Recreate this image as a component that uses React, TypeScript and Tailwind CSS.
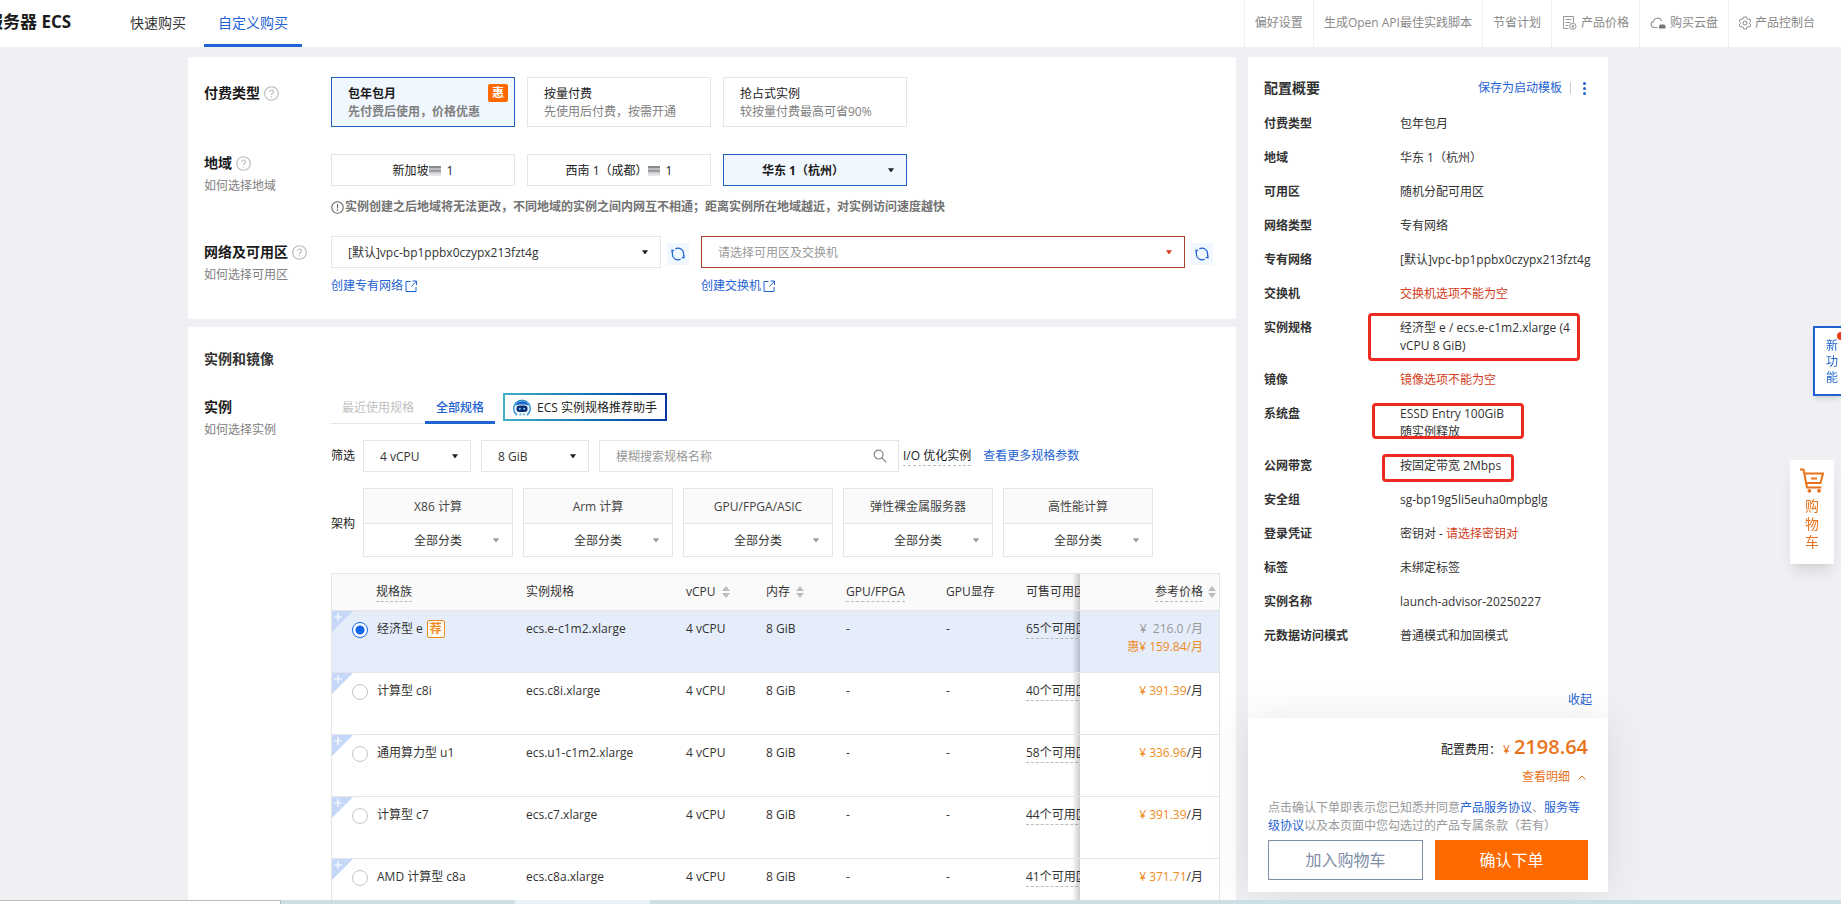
import React, { useState } from 'react';

interface SpecRow {
  family: string;
  spec: string;
  zones: string;
  price: string;
  original?: string;
  recommended?: boolean;
}

interface SummaryItem {
  label: string;
  value: React.ReactNode;
  mark?: string;
}

const specRows: SpecRow[] = [
  { family: '经济型 e', spec: 'ecs.e-c1m2.xlarge', zones: '65个可用区', price: '159.84', original: '216.0', recommended: true },
  { family: '计算型 c8i', spec: 'ecs.c8i.xlarge', zones: '40个可用区', price: '391.39' },
  { family: '通用算力型 u1', spec: 'ecs.u1-c1m2.xlarge', zones: '58个可用区', price: '336.96' },
  { family: '计算型 c7', spec: 'ecs.c7.xlarge', zones: '44个可用区', price: '391.39' },
  { family: 'AMD 计算型 c8a', spec: 'ecs.c8a.xlarge', zones: '41个可用区', price: '371.71' },
];

const architectures = ['X86 计算', 'Arm 计算', 'GPU/FPGA/ASIC', '弹性裸金属服务器', '高性能计算'];

const payTypes = [
  { title: '包年包月', desc: '先付费后使用，价格优惠', badge: '惠' },
  { title: '按量付费', desc: '先使用后付费，按需开通' },
  { title: '抢占式实例', desc: '较按量付费最高可省90%' },
];

const summary: SummaryItem[] = [
  { label: '付费类型', value: '包年包月' },
  { label: '地域', value: '华东 1（杭州）' },
  { label: '可用区', value: '随机分配可用区' },
  { label: '网络类型', value: '专有网络' },
  { label: '专有网络', value: '[默认]vpc-bp1ppbx0czypx213fzt4g' },
  { label: '交换机', value: <span className="text-[#d23c20]">交换机选项不能为空</span> },
  { label: '实例规格', value: <>经济型 e / ecs.e-c1m2.xlarge (4<br />vCPU 8 GiB)</>, mark: '-left-8 -top-1.5 w-[212px] h-12' },
  { label: '镜像', value: <span className="text-[#d23c20]">镜像选项不能为空</span> },
  { label: '系统盘', value: <>ESSD Entry 100GiB<br />随实例释放</>, mark: '-left-7 -top-0.5 w-[152px] h-9' },
  { label: '公网带宽', value: '按固定带宽 2Mbps', mark: '-left-[18px] -top-[3px] w-[132px] h-7' },
  { label: '安全组', value: 'sg-bp19g5li5euha0mpbglg' },
  { label: '登录凭证', value: <>密钥对 - <span className="text-[#d23c20]">请选择密钥对</span></> },
  { label: '标签', value: '未绑定标签' },
  { label: '实例名称', value: 'launch-advisor-20250227' },
  { label: '元数据访问模式', value: '普通模式和加固模式' },
];

/* ---------- Icons ---------- */

const HelpIcon = () => (
  <svg width="15" height="15" viewBox="0 0 15 15" fill="none" stroke="#b9b9b9" strokeWidth="1.1">
    <circle cx="7.5" cy="7.5" r="6.8" />
    <path d="M5.6 6a1.9 1.9 0 1 1 2.9 1.6c-.7.4-1 .8-1 1.5M7.5 10.2v1.2" />
  </svg>
);

const NoticeIcon = () => (
  <svg width="13" height="13" viewBox="0 0 13 13" fill="none" stroke="#666" strokeWidth="1.1">
    <circle cx="6.5" cy="6.5" r="5.7" />
    <path d="M6.5 3v4.6M6.5 8.6v1.4" />
  </svg>
);

const Caret = ({ className = 'text-[#222]' }: { className?: string }) => (
  <svg width="6" height="4" viewBox="0 0 6 4" className={className}>
    <path d="M0 .3h6L3.4 4h-.8z" fill="currentColor" />
  </svg>
);

const ExternalIcon = () => (
  <svg width="12" height="12" viewBox="0 0 12 12" fill="none" stroke="currentColor" strokeWidth="1">
    <path d="M5.5 1.5h-4.5v10h10v-4.5M7.5 1h4v4M11.5 1l-5 5.5" />
  </svg>
);

const RefreshIcon = () => (
  <svg width="14" height="14" viewBox="0 0 14 14" fill="none" stroke="#1f63d2" strokeWidth="1.2">
    <path d="M4.4 1.9A5.6 5.6 0 0 1 12.6 7v2M9.6 12.1A5.6 5.6 0 0 1 1.4 7V5" />
    <path d="M13.6 8.2v3.4l-3.4-.6zM.4 5.8V2.4l3.4.6z" fill="#1f63d2" stroke="none" />
  </svg>
);

const SearchIcon = () => (
  <svg width="14" height="14" viewBox="0 0 14 14" fill="none" stroke="#888" strokeWidth="1.2">
    <circle cx="5.6" cy="5.6" r="4.4" />
    <path d="M8.9 8.9l4.2 4.2" />
  </svg>
);

const SortIcon = () => (
  <svg width="8" height="12" viewBox="0 0 8 12" fill="#bdbdbd">
    <path d="M4 0l4 5H0zM4 12l4-5H0z" />
  </svg>
);

const MosaicIcon = () => (
  <svg width="12" height="10" viewBox="0 0 12 10">
    <rect width="12" height="2" y="0" fill="#8a8a8e" />
    <rect width="12" height="2" y="2" fill="#bdbdc0" />
    <rect width="12" height="2" y="4" fill="#9c9ca0" />
    <rect width="12" height="2" y="6" fill="#d2d2d4" />
    <rect width="12" height="2" y="8" fill="#e8e8ea" />
  </svg>
);

const PriceIcon = () => (
  <svg width="15" height="16" viewBox="0 0 15 16" fill="none" stroke="#999" strokeWidth="1">
    <path d="M6.5 13.5H1.5V1.5h10v6M3.5 4.5h6M3.5 7.5h5M3.5 10.5h3" />
    <circle cx="10.8" cy="11.3" r="3.2" />
    <path d="M9.4 9.6l1.4 1.6 1.4-1.6M10.8 11.2v2.2M9.5 11.8h2.6" />
  </svg>
);

const CloudDiskIcon = () => (
  <svg width="16" height="14" viewBox="0 0 16 14" fill="none" stroke="#999" strokeWidth="1.1">
    <path d="M7.5 11.5H4a3 3 0 0 1-.6-5.9A4.2 4.2 0 0 1 11.5 5" />
    <path d="M10 8.5h4.500l1 1.500v2.500H9V10z" fill="#777" stroke="none" />
  </svg>
);

const GearIcon = () => (
  <svg width="12" height="14" viewBox="0 0 12 14" fill="none" stroke="#8a8a8a" strokeWidth="1">
    <path d="M4.7 1h2.6l.5 1.7 1.2.7 1.7-.4 1.1 2.2L10.6 6.4v1.2l1.2 1.2-1.1 2.2-1.7-.4-1.2.7-.5 1.7H4.7l-.5-1.7-1.2-.7-1.7.4L.2 8.800l1.2-1.2V6.400L.2 5.200l1.100-2.200 1.700.4 1.200-.7z" />
    <circle cx="6" cy="7" r="2" />
  </svg>
);

const RobotIcon = () => (
  <svg width="18" height="18" viewBox="0 0 18 18">
    <circle cx="9" cy="8.8" r="7.6" fill="#eaf6fc" />
    <path d="M4 16.2A8.3 8.3 0 1 1 14 16.2" fill="none" stroke="#2a8fd0" strokeWidth="1.4" />
    <path d="M2.2 6.5A7.5 7.5 0 0 1 15.8 6.5C13 5 5 5 2.2 6.5z" fill="#1765c8" />
    <rect x="3.5" y="6.5" width="11" height="6.6" rx="3" fill="#0c2a72" />
    <rect x="5.8" y="8.7" width="2" height="2" rx=".8" fill="#7fd6f5" />
    <rect x="10.2" y="8.7" width="2" height="2" rx=".8" fill="#7fd6f5" />
    <path d="M6.5 16.2l1.5-1.4M11.5 16.2L10 14.8" stroke="#54b4e2" strokeWidth="1.3" />
  </svg>
);

const CartIcon = () => (
  <svg width="25" height="25" viewBox="0 0 25 25" fill="none" stroke="#e8731a" strokeWidth="2">
    <path d="M0 1.5h3.5L7 19.5h14.5M4.6 5.5h18.400l-2.500 9.500H6.400" />
    <path d="M11 10.5h6" />
    <circle cx="9.3" cy="22.8" r="1.9" fill="#e8731a" stroke="none" />
    <circle cx="19" cy="22.8" r="1.9" fill="#e8731a" stroke="none" />
  </svg>
);

const CornerPlus = () => (
  <svg width="21" height="21" viewBox="0 0 21 21" className="shrink-0">
    <path d="M0 0h21L0 21z" fill="#c5d8f9" />
    <path d="M2 6h8M6 2v8" stroke="#fff" strokeWidth="1.2" />
  </svg>
);

/* ---------- Small building blocks ---------- */

const FormLabel = ({ text, sub, help = true, className = '' }: { text: string; sub?: string; help?: boolean; className?: string }) => (
  <div className={`w-[127px] shrink-0 ${className}`}>
    <div className="flex items-center gap-1 text-sm leading-[18px] font-bold text-[#1a1a1a]">
      {text}
      {help && <HelpIcon />}
    </div>
    {sub && <a href="#" className="mt-[5px] block leading-[18px] text-[#808080]">{sub}</a>}
  </div>
);

interface DropDownProps {
  label: string;
  options: string[];
  className?: string;
  selectClass?: string;
  caretClass?: string;
}

const DropDown: React.FC<DropDownProps> = ({ label, options, className = '', selectClass = 'border-[#e5e5e5] bg-white pl-4', caretClass }) => (
  <div className={`relative h-8 ${className}`}>
    <select aria-label={label} className={`h-full w-full appearance-none border pt-px pr-6 outline-none ${selectClass}`}>
      {options.map((option) => (
        <option key={option}>{option}</option>
      ))}
    </select>
    <span className="pointer-events-none absolute inset-y-0 right-[13px] flex items-center">
      <Caret className={caretClass} />
    </span>
  </div>
);

const RefreshButton = ({ label }: { label: string }) => (
  <button aria-label={label} className="mt-[7px] ml-1.5 flex h-[22px] w-[22px] shrink-0 items-center justify-center bg-[#f1f7fe]">
    <RefreshIcon />
  </button>
);

/* ---------- Page header ---------- */

const navLink = 'flex items-center gap-1 border-l border-[#f0f0f0] px-[10px] pb-0.5 text-[#888]';

const Header = () => (
  <header className="flex h-[47px] shrink-0 overflow-hidden bg-white">
    <h1 className="-ml-[14px] flex w-[128px] shrink-0 items-center pb-0.5 text-[17px] font-bold whitespace-nowrap text-[#1a1a1a]">服务器 ECS</h1>
    <nav className="flex text-sm">
      <a href="#" className="flex items-center px-4 pb-0.5 text-[#333]">快速购买</a>
      <a href="#" className="ml-0.5 flex items-center border-b-[3px] border-[#1f63d2] px-[14px] pt-px text-[#1f63d2]">自定义购买</a>
    </nav>
    <nav className="ml-auto flex pr-4">
      <a href="#" className={navLink}>偏好设置</a>
      <a href="#" className={navLink}>生成Open API最佳实践脚本</a>
      <a href="#" className={navLink}>节省计划</a>
      <a href="#" className={navLink}><PriceIcon />产品价格</a>
      <a href="#" className={navLink}><CloudDiskIcon />购买云盘</a>
      <a href="#" className={navLink}><GearIcon />产品控制台</a>
    </nav>
  </header>
);

/* ---------- Billing, region and network ---------- */

const BasicSection = () => {
  const [payType, setPayType] = useState(0);

  return (
    <section className="bg-white px-4 pt-5 pb-6">
      <div className="flex">
        <FormLabel text="付费类型" className="pt-[7px]" />
        <div className="flex gap-3">
          {payTypes.map((type, index) => (
            <button
              key={type.title}
              onClick={() => setPayType(index)}
              className={`relative h-[50px] w-[184px] border px-4 pt-0.5 text-left leading-[18px] ${
                payType === index ? 'border-[#1f5fb8] bg-[#f1f7fe] font-bold' : 'border-[#e5e5e5]'
              }`}
            >
              <span className="block text-[#1a1a1a]">{type.title}</span>
              <span className="block text-[#808080]">{type.desc}</span>
              {type.badge && (
                <span className="absolute top-1.5 right-1.5 flex h-[18px] w-5 items-center justify-center rounded-xs bg-[#ff6a00] text-white">
                  {type.badge}
                </span>
              )}
            </button>
          ))}
        </div>
      </div>

      <div className="mt-[27px] flex">
        <FormLabel text="地域" sub="如何选择地域" />
        <div>
          <div className="flex gap-3 text-[#1a1a1a]">
            <button className="flex h-8 w-[184px] items-center justify-center border border-[#e5e5e5] pt-px">
              新加坡<MosaicIcon /><span className="ml-1.5">1</span>
            </button>
            <button className="flex h-8 w-[184px] items-center justify-center border border-[#e5e5e5] pt-px">
              西南 1（成都）<MosaicIcon /><span className="ml-1.5">1</span>
            </button>
            <DropDown
              label="地域"
              options={['华东 1（杭州）']}
              className="w-[184px]"
              selectClass="border-[#1f5fb8] bg-[#f1f7fe] pl-0 font-bold [text-align-last:center]"
            />
          </div>
          <p className="mt-3 flex items-center leading-[18px] font-bold text-[#737373]">
            <NoticeIcon />
            <span className="ml-px">实例创建之后地域将无法更改，不同地域的实例之间内网互不相通；距离实例所在地域越近，对实例访问速度越快</span>
          </p>
        </div>
      </div>

      <div className="mt-5 flex">
        <FormLabel text="网络及可用区" sub="如何选择可用区" className="pt-[7px]" />
        <div className="flex flex-1">
          <div className="flex">
            <div>
              <DropDown label="专有网络" options={['[默认]vpc-bp1ppbx0czypx213fzt4g']} className="w-[330px]" />
              <a href="#" className="mt-[9px] flex items-center gap-0.5 leading-[18px] text-[#1f63d2]">创建专有网络<ExternalIcon /></a>
            </div>
            <RefreshButton label="刷新专有网络" />
          </div>
          <div className="ml-3 flex max-w-[512px] flex-1">
            <div className="flex-1">
              <DropDown
                label="交换机"
                options={['请选择可用区及交换机']}
                selectClass="border-[#a8402c] bg-white pl-4 text-[#999]"
                caretClass="text-[#d23c20]"
              />
              <a href="#" className="mt-[9px] flex items-center gap-0.5 leading-[18px] text-[#1f63d2]">创建交换机<ExternalIcon /></a>
            </div>
            <RefreshButton label="刷新交换机" />
          </div>
        </div>
      </div>
    </section>
  );
};

/* ---------- Instance table ---------- */

const dashed = 'inline-block border-b border-dashed border-[#bbb]';
const clippedCell =
  "relative overflow-hidden after:absolute after:inset-y-0 after:right-0 after:w-2 after:bg-linear-to-l after:from-black/20 after:to-transparent after:content-['']";

const SpecTable = () => {
  const [selected, setSelected] = useState(0);

  return (
    <div className="mt-4 overflow-hidden border border-[#e5e5e5]">
      <table className="w-full table-fixed border-separate border-spacing-0 text-left">
        <colgroup>
          <col className="w-11" />
          <col />
          <col className="w-40" />
          <col className="w-20" />
          <col className="w-20" />
          <col className="w-[100px]" />
          <col className="w-20" />
          <col className="w-[54px]" />
          <col className="w-[139px]" />
        </colgroup>
        <thead>
          <tr className="h-[37px] bg-[#fafafa] leading-[18px] whitespace-nowrap text-[#333] [&>th]:border-b [&>th]:border-[#e5e5e5] [&>th]:font-normal">
            <th />
            <th><span className={dashed}>规格族</span></th>
            <th>实例规格</th>
            <th><span className="flex items-center gap-1.5">vCPU<SortIcon /></span></th>
            <th><span className="flex items-center gap-1.5">内存<SortIcon /></span></th>
            <th><span className={dashed}>GPU/FPGA</span></th>
            <th>GPU显存</th>
            <th className={clippedCell}>可售可用区</th>
            <th className="relative pr-4 text-right">
              <span className={dashed}>参考价格</span>
              <span className="absolute inset-y-0 right-[3px] flex items-center"><SortIcon /></span>
            </th>
          </tr>
        </thead>
        <tbody>
          {specRows.map((row, index) => {
            const active = selected === index;
            return (
              <tr
                key={row.spec}
                className={`h-[62px] align-top leading-[18px] whitespace-nowrap text-[#333] [&>td]:border-b [&>td]:border-[#e5e5e5] [&>td]:pt-[9px] ${active ? 'bg-[#e5edfb]' : ''}`}
              >
                <td className="pt-0!">
                  <div className="flex">
                    <CornerPlus />
                    <input
                      type="radio"
                      name="spec"
                      id={row.spec}
                      checked={active}
                      onChange={() => setSelected(index)}
                      className="mt-[11px] -ml-px h-4 w-4 shrink-0 appearance-none rounded-full border border-[#c4c4c4] bg-white checked:border-[#1366ec] checked:bg-[radial-gradient(#1366ec_4px,#fff_5px)]"
                    />
                  </div>
                </td>
                <td>
                  <label htmlFor={row.spec} className="flex pl-px">
                    {row.family}
                    {row.recommended && (
                      <span className="ml-1 flex h-[18px] w-[18px] items-center justify-center rounded-xs border border-[#f08b1d] bg-[#fffaf2] font-bold text-[#f08b1d]">荐</span>
                    )}
                  </label>
                </td>
                <td>{row.spec}</td>
                <td>4 vCPU</td>
                <td>8 GiB</td>
                <td>-</td>
                <td>-</td>
                <td className={clippedCell}><span className={dashed}>{row.zones}</span></td>
                <td className="pr-4 text-right">
                  {row.original ? (
                    <>
                      <div className="text-[#999]">¥&nbsp; {row.original} /月</div>
                      <div className="text-[#f08b1d]">惠¥ {row.price}/月</div>
                    </>
                  ) : (
                    <><span className="text-[#f08b1d]">¥ {row.price}</span>/月</>
                  )}
                </td>
              </tr>
            );
          })}
        </tbody>
      </table>
    </div>
  );
};

const InstanceSection = () => (
  <section className="mt-2 bg-white px-4 pt-[23px] pb-6">
    <h2 className="text-sm leading-[18px] font-bold text-[#333]">实例和镜像</h2>
    <div className="mt-[25px] flex">
      <FormLabel text="实例" sub="如何选择实例" help={false} className="pt-[5px]" />
      <div className="min-w-0 flex-1">
        <div className="flex h-[31px]">
          <button className="border-b border-[#e5e5e5] px-[11px] text-[#bfbfbf]">最近使用规格</button>
          <button className="border-b-[3px] border-[#1f63d2] px-[11px] pt-0.5 font-medium text-[#1f63d2]">全部规格</button>
          <button className="ml-2 flex h-7 bg-linear-to-r from-[#3fb0c8] to-[#0b35a0] p-0.5">
            <span className="flex h-full items-center gap-1.5 bg-white px-2 pt-px text-[#222]">
              <RobotIcon />ECS 实例规格推荐助手
            </span>
          </button>
        </div>

        <div className="mt-4 flex items-center">
          <span className="w-8 shrink-0 text-[#1a1a1a]">筛选</span>
          <DropDown label="vCPU" options={['4 vCPU']} className="w-[108px]" />
          <DropDown label="内存" options={['8 GiB']} className="ml-[10px] w-[108px]" />
          <div className="relative ml-[10px] h-8 w-[300px]">
            <input
              aria-label="规格名称"
              placeholder="模糊搜索规格名称"
              className="h-full w-full border border-[#e5e5e5] pt-px pr-8 pl-4 outline-none placeholder:text-[#999]"
            />
            <span className="absolute inset-y-0 right-3 flex items-center"><SearchIcon /></span>
          </div>
          <span className={`${dashed} ml-1 leading-[18px] text-[#1a1a1a]`}>I/O 优化实例</span>
          <a href="#" className="ml-3 text-[#1f63d2]">查看更多规格参数</a>
        </div>

        <div className="mt-4 flex items-center">
          <span className="w-8 shrink-0 pt-0.5 text-[#1a1a1a]">架构</span>
          <div className="flex gap-[10px]">
            {architectures.map((name) => (
              <div key={name} className="w-[150px] border border-[#e5e5e5]">
                <div className="flex h-[34px] items-center justify-center bg-[#fafafa] pt-0.5 text-[#444]">{name}</div>
                <div className="border-t border-[#e5e5e5]">
                  <DropDown
                    label={name}
                    options={['全部分类']}
                    selectClass="border-transparent bg-white pl-6 [text-align-last:center] text-[#333]"
                    caretClass="text-[#999]"
                  />
                </div>
              </div>
            ))}
          </div>
        </div>

        <SpecTable />
      </div>
    </div>
  </section>
);

/* ---------- Order summary ---------- */

const OrderSummary = () => (
  <aside className="mt-[10px] mb-2 flex w-[360px] shrink-0 flex-col bg-white">
    <div className="flex items-center px-4 pt-[22px] leading-[18px]">
      <h2 className="text-sm leading-[18px] font-bold text-[#333]">配置概要</h2>
      <a href="#" className="ml-auto text-[#1f63d2]">保存为启动模板</a>
      <span className="ml-2 h-3 w-px bg-[#ccc]" />
      <button aria-label="更多" className="ml-3 mr-1.5 flex flex-col gap-0.5">
        <span className="h-[3px] w-[3px] rounded-full bg-[#1f63d2]" />
        <span className="h-[3px] w-[3px] rounded-full bg-[#1f63d2]" />
        <span className="h-[3px] w-[3px] rounded-full bg-[#1f63d2]" />
      </button>
    </div>

    <dl className="mt-[18px] flex min-h-0 flex-1 flex-col gap-4 px-4 leading-[18px] text-[#333]">
      {summary.map((item) => (
        <div key={item.label} className="flex">
          <dt className="w-[136px] shrink-0 font-bold">{item.label}</dt>
          <dd className="relative flex-1 whitespace-nowrap">
            {item.value}
            {item.mark && <span className={`pointer-events-none absolute rounded-sm border-[3px] border-[#ec2a20] ${item.mark}`} />}
          </dd>
        </div>
      ))}
    </dl>
    <a href="#" className="mr-4 mb-[9px] self-end leading-[18px] text-[#1f63d2]">收起</a>

    <div className="bg-white px-5 pt-[17px] pb-3 shadow-[0_0_40px_rgba(0,0,0,0.09)]">
      <div className="flex items-baseline justify-end leading-6">
        <span className="text-[#1a1a1a]">配置费用：</span>
        <span className="ml-0.5 text-[#e8731a]">¥</span>
        <span className="ml-1 text-xl leading-6 font-semibold text-[#e8731a]">2198.64</span>
      </div>
      <button className="mt-1.5 ml-auto flex items-center gap-2 pr-0.5 leading-[18px] text-[#e8731a]">
        查看明细
        <svg width="8" height="5" viewBox="0 0 8 5" fill="none" stroke="currentColor"><path d="M.5 4.5L4 1l3.5 3.5" /></svg>
      </button>
      <p className="mt-[13px] leading-[18px] text-[#999]">
        点击确认下单即表示您已知悉并同意<a href="#" className="text-[#1f63d2]">产品服务协议</a>、<a href="#" className="text-[#1f63d2]">服务等级协议</a>以及本页面中您勾选过的产品专属条款（若有）
      </p>
      <div className="mt-[5px] flex gap-3 text-base">
        <button className="h-10 flex-1 border border-[#7f8fa6] text-[#7f8fa6]">加入购物车</button>
        <button className="h-10 flex-1 bg-[#ff6a00] text-white">确认下单</button>
      </div>
    </div>
  </aside>
);

export default function App() {
  return (
    <div className="flex h-screen flex-col overflow-hidden bg-[#eff0f4] font-['Open_Sans','Noto_Sans_CJK_SC',sans-serif] text-xs text-[#333]">
      <Header />

      <main className="flex min-h-0 flex-1 gap-3 overflow-hidden pr-[233px] pl-[188px]">
        <div className="min-w-0 flex-1 pt-[10px]">
          <BasicSection />
          <InstanceSection />
        </div>
        <OrderSummary />
      </main>

      <footer className="flex h-1 shrink-0 bg-[#cbdfe4]">
        <span className="w-[281px] border-t border-r border-[#bbb] bg-white" />
        <span className="ml-[234px] w-[135px] bg-[#e8f2f4]" />
      </footer>

      {/* Floating shortcuts on the right edge */}
      <button className="fixed top-[326px] right-0 flex h-[70px] w-7 flex-col items-center border-2 border-r-0 border-[#1f63d2] bg-white pt-2.5 pl-2 leading-4 text-[#1f63d2] shadow-md">
        <span>新</span>
        <span>功</span>
        <span>能</span>
        <span className="absolute top-1 -right-1 h-2 w-2 rounded-full bg-[#f03a17]" />
      </button>
      <button className="fixed top-[460px] right-[7px] flex h-[104px] w-11 flex-col items-center bg-white pt-2 text-sm leading-[18px] text-[#e8731a] shadow-lg">
        <CartIcon />
        <span className="mt-1">购</span>
        <span>物</span>
        <span>车</span>
      </button>
    </div>
  );
}
